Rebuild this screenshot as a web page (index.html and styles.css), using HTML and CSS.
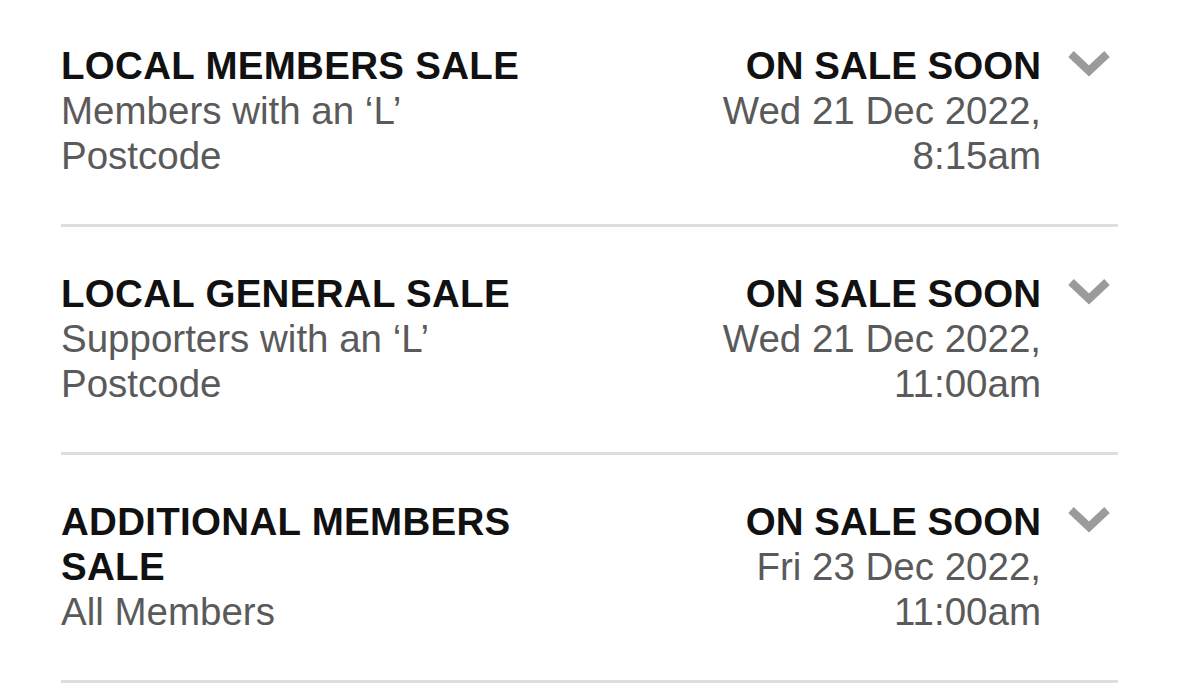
FILE: index.html
```html
<!DOCTYPE html>
<html lang="en">
<head>
    <meta charset="UTF-8">
    <meta name="viewport" content="width=device-width, initial-scale=1.0">
    <title>Ticket sales</title>
    <link rel="stylesheet" href="styles.css">
</head>
<body>
    <!-- Sale phases -->
    <div class="sale-list">
        <div class="sale-row">
            <div class="sale-info">
                <div class="sale-name">LOCAL MEMBERS SALE</div>
                <div class="sale-detail">Members with an &lsquo;L&rsquo; Postcode</div>
            </div>
            <div class="sale-status">
                <div class="status-label">ON SALE SOON</div>
                <div class="sale-detail">Wed 21 Dec 2022, 8:15am</div>
            </div>
            <svg class="chevron" width="44" height="28" viewBox="0 0 44 28">
                <polyline points="4,5 22,22 40,5" />
            </svg>
        </div>

        <div class="sale-row">
            <div class="sale-info">
                <div class="sale-name">LOCAL GENERAL SALE</div>
                <div class="sale-detail">Supporters with an &lsquo;L&rsquo; Postcode</div>
            </div>
            <div class="sale-status">
                <div class="status-label">ON SALE SOON</div>
                <div class="sale-detail">Wed 21 Dec 2022, 11:00am</div>
            </div>
            <svg class="chevron" width="44" height="28" viewBox="0 0 44 28">
                <polyline points="4,5 22,22 40,5" />
            </svg>
        </div>

        <div class="sale-row">
            <div class="sale-info">
                <div class="sale-name">ADDITIONAL MEMBERS SALE</div>
                <div class="sale-detail">All Members</div>
            </div>
            <div class="sale-status">
                <div class="status-label">ON SALE SOON</div>
                <div class="sale-detail">Fri 23 Dec 2022, 11:00am</div>
            </div>
            <svg class="chevron" width="44" height="28" viewBox="0 0 44 28">
                <polyline points="4,5 22,22 40,5" />
            </svg>
        </div>
    </div>
</body>
</html>
```

FILE: styles.css
```css
body {
    font-family: "Liberation Sans", Arial, sans-serif;
    background-color: #fff;
    color: #111;
    margin: 0;
    padding: 0;
}
.sale-list {
    margin: -1px 61px 0 61px;
}
.sale-row {
    display: flex;
    align-items: flex-start;
    padding: 44px 7px 46px 0;
    border-bottom: 3px solid #dedede;
    font-size: 38.5px;
    line-height: 45px;
}
.sale-info {
    width: 500px;
}
.sale-name,
.status-label {
    font-weight: bold;
    color: #111;
}
.sale-name {
    letter-spacing: 0.3px;
}
.sale-detail {
    color: #5a5a5a;
}
.sale-status {
    margin-left: auto;
    width: 335px;
    text-align: right;
}
.chevron {
    margin-left: 26px;
    margin-top: 6px;
    flex-shrink: 0;
}
.chevron polyline {
    fill: none;
    stroke: #9b9b9b;
    stroke-width: 8;
}
```
